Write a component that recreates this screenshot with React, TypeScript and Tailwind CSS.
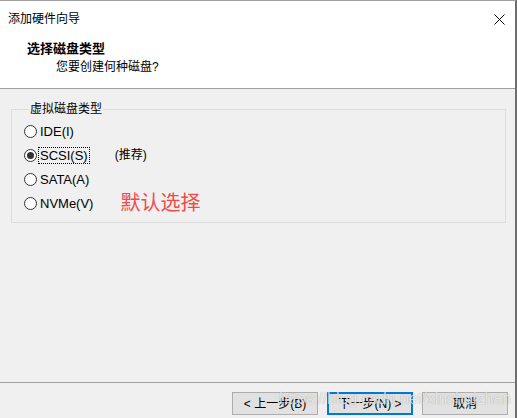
import { ReactNode } from 'react'

const FONT = '"Liberation Sans", "Noto Sans CJK SC", sans-serif'

function Radio({ checked }: { checked?: boolean }) {
  return (
    <span className="w-[13px] h-[13px] rounded-full border border-[#333] bg-white flex items-center justify-center shrink-0">
      {checked && <span className="w-[7px] h-[7px] rounded-full bg-[#333]" />}
    </span>
  )
}

function Option({ label, checked, focused, extra }: { label: string; checked?: boolean; focused?: boolean; extra?: ReactNode }) {
  return (
    <div className="h-6 flex items-center">
      <Radio checked={checked} />
      <span className={`ml-[2px] px-[1px] leading-[15px] text-[13px] text-[#000] ${focused ? 'outline outline-1 outline-dotted outline-[#000]' : ''}`}>
        {label}
      </span>
      {extra}
    </div>
  )
}

function WizardButton({ children, primary }: { children: ReactNode; primary?: boolean }) {
  return (
    <button
      className={`w-[86px] h-[23px] flex items-center justify-center text-[12px] text-black bg-[#e1e1e1] ${
        primary ? 'border-2 border-[#0078d7]' : 'border border-[#adadad]'
      }`}
    >
      {children}
    </button>
  )
}

export default function App() {
  return (
    <div
      className="relative w-[517px] h-[418px] bg-[#f0f0f0] border-t border-r-2 border-t-[#a0a0a0] border-r-[#6e6e6e] flex flex-col overflow-hidden"
      style={{ fontFamily: FONT }}
    >
      {/* 头部 */}
      <div className="h-[88px] bg-white border-b border-[#a0a0a0] shrink-0">
        <div className="flex items-center justify-between pl-2 pr-[10px] pt-[10px] h-[26px]">
          <span className="text-[12px] leading-4 text-black">添加硬件向导</span>
          <svg width="11" height="11" viewBox="0 0 11 11">
            <path d="M0.5 0.5L10.5 10.5M10.5 0.5L0.5 10.5" stroke="#000" strokeWidth="1" />
          </svg>
        </div>
        <div className="pl-[27px] pt-[14px] text-[13px] leading-4 font-bold text-black">选择磁盘类型</div>
        <div className="pl-[56px] pt-[2px] text-[12px] leading-4 text-black">您要创建何种磁盘?</div>
      </div>

      {/* 磁盘类型 */}
      <fieldset className="mx-[11px] mt-[12px] w-[495px] border border-[#dcdcdc] pl-[12px] pt-[2px] pb-[7px]">
        <legend className="ml-[5px] px-[1px] text-[12px] leading-4 text-black">虚拟磁盘类型</legend>
        <Option label="IDE(I)" />
        <Option
          label="SCSI(S)"
          checked
          focused
          extra={<span className="ml-[26px] text-[12px] text-black">(推荐)</span>}
        />
        <Option label="SATA(A)" />
        <Option
          label="NVMe(V)"
          extra={<span className="ml-[26px] text-[20px] leading-6 text-[#f24949]">默认选择</span>}
        />
      </fieldset>

      <div className="flex-1" />

      {/* 底部按钮 */}
      <div className="h-[36px] border-t border-[#a0a0a0] flex justify-end items-start gap-[9px] pt-[9px] pr-[7px] shrink-0">
        <WizardButton>&lt; 上一步(B)</WizardButton>
        <WizardButton primary>下一步(N) &gt;</WizardButton>
        <WizardButton>取消</WizardButton>
      </div>

      {/* 水印 */}
      <span className="absolute left-[279px] top-[390px] text-[16px] leading-4 text-white/75 pointer-events-none [text-shadow:0_0_1px_rgba(0,0,0,0.35)]">
        https://blog.csdn.net/xinshuizhan
      </span>
    </div>
  )
}
